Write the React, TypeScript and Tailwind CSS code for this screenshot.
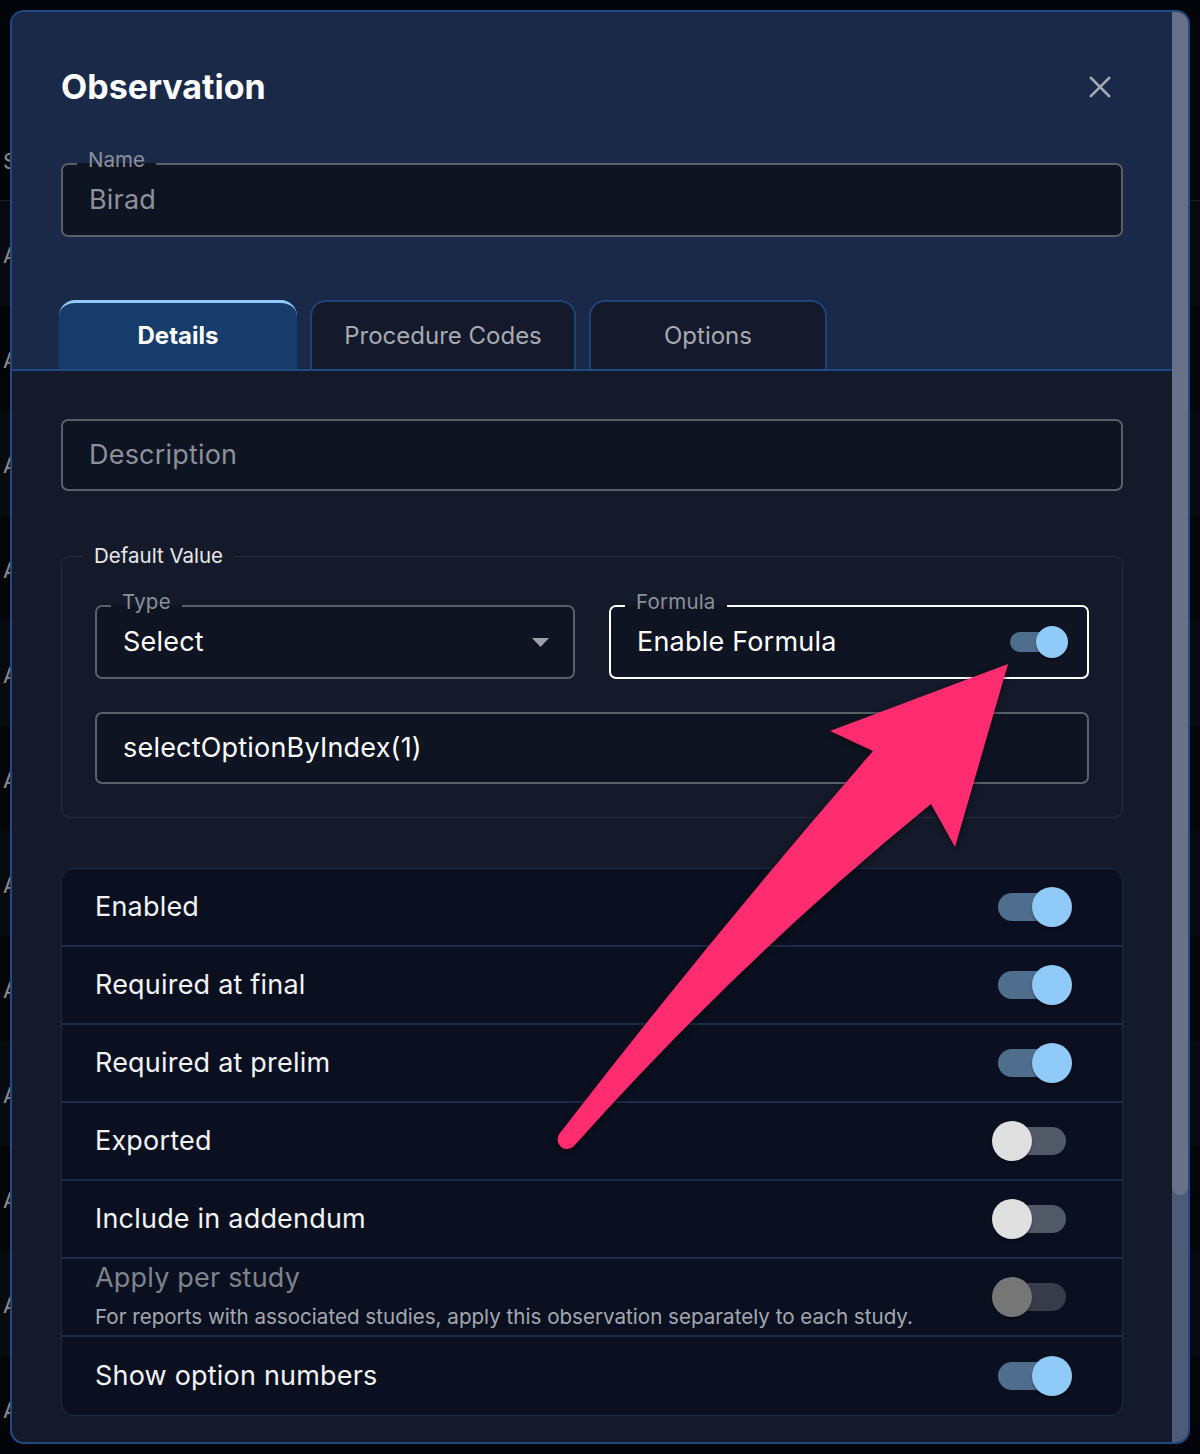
import React from 'react';

type ToggleProps = { on?: boolean; disabled?: boolean };

// MUI-like switch used in the settings list
function Toggle({ on, disabled }: ToggleProps) {
  const track = disabled ? 'bg-[#373c48]' : on ? 'bg-[#4f6d8c]' : 'bg-[#525966]';
  const thumb = disabled ? 'bg-[#767676]' : on ? 'bg-[#90caf9]' : 'bg-[#e0e0e0]';
  return (
    <div className="relative w-[80px] h-[40px] flex items-center justify-center">
      <div className={`w-[68px] h-[28px] rounded-full ${track}`} />
      <div
        className={`absolute top-0 ${on ? 'right-0' : 'left-0'} w-[40px] h-[40px] rounded-full ${thumb} shadow-[0_2px_2px_rgba(0,0,0,0.35)]`}
      />
    </div>
  );
}

function SmallToggle() {
  return (
    <div className="relative w-[58px] h-[32px] flex items-center">
      <div className="w-[52px] h-[20px] rounded-full bg-[#4f6d8c]" />
      <div className="absolute top-0 right-0 w-[32px] h-[32px] rounded-full bg-[#90caf9] shadow-[0_2px_2px_rgba(0,0,0,0.35)]" />
    </div>
  );
}

function Outlined({
  label,
  focused,
  className,
  children,
}: {
  label: string;
  focused?: boolean;
  className?: string;
  children: React.ReactNode;
}) {
  return (
    <fieldset
      className={`rounded-[7px] border-2 bg-[#0e1421] ${focused ? 'border-white' : 'border-[#5b5f68]'} ${className ?? ''}`}
    >
      <legend className="ml-[14px] px-[11px] pb-[8px] text-[20.5px] leading-[24px] text-[#8b909a]">{label}</legend>
      {children}
    </fieldset>
  );
}

const rows: { label: string; on?: boolean; disabled?: boolean; desc?: string }[] = [
  { label: 'Enabled', on: true },
  { label: 'Required at final', on: true },
  { label: 'Required at prelim', on: true },
  { label: 'Exported' },
  { label: 'Include in addendum' },
  {
    label: 'Apply per study',
    disabled: true,
    desc: 'For reports with associated studies, apply this observation separately to each study.',
  },
  { label: 'Show option numbers', on: true },
];

export default function App() {
  return (
    <div className="relative w-[1200px] h-[1454px] overflow-hidden bg-[#03050b] font-[Inter,sans-serif]">
      {/* page behind the dialog */}
      <div className="flex flex-col text-[22px] text-[#8a8a8a]">
        <div className="h-[201px] border-b border-[#1a1e29] flex flex-col justify-end pb-[24px] pl-[3px]">
          <span className="leading-[30px]">Status</span>
        </div>
        {Array.from({ length: 12 }).map((_, i) => (
          <div
            key={i}
            className={`h-[105px] flex items-center pl-[3px] pt-[4px] ${i % 2 === 0 ? 'bg-[#080a11]' : 'bg-[#03050b]'}`}
          >
            Active
          </div>
        ))}
      </div>

      {/* dialog */}
      <div className="absolute inset-0 p-[10px]">
        <div className="h-full flex rounded-[14px] border-2 border-[#1f4b85] overflow-hidden bg-[#151a2b]">
          <div className="flex-1 flex flex-col">
            <div className="bg-[#1b2949] border-b-2 border-[#1f4b85] px-[49px] pt-[55px]">
              <div className="flex items-center justify-between">
                <h1 className="text-[34px] leading-[40px] font-bold text-white">Observation</h1>
                <svg width="22" height="22" viewBox="0 0 22 22" className="mr-[12px]">
                  <path d="M2 2 L20 20 M20 2 L2 20" stroke="#a4a8b3" strokeWidth="2.6" strokeLinecap="square" />
                </svg>
              </div>

              <Outlined label="Name" className="mt-[41px]">
                <div className="px-[26px] pt-[4px] pb-[19px] text-[27px] tracking-[0.2px] leading-[32px] text-[#8d929b]">
                  Birad
                </div>
              </Outlined>

              <div className="mt-[63px] ml-[-2px] flex gap-[13px] text-[24px]">
                <div className="w-[238px] h-[69px] rounded-t-[16px] border-t-[3px] border-[#90caf9] bg-[#173c6b] flex items-center justify-center font-bold text-white">
                  Details
                </div>
                <div className="w-[266px] h-[69px] rounded-t-[16px] border-2 border-b-0 border-[#1d4477] bg-[#141a2b] flex items-center justify-center text-[#a7aab1]">
                  Procedure Codes
                </div>
                <div className="w-[238px] h-[69px] rounded-t-[16px] border-2 border-b-0 border-[#1d4477] bg-[#141a2b] flex items-center justify-center text-[#a7aab1]">
                  Options
                </div>
              </div>
            </div>

            <div className="px-[49px] pt-[48px] text-[27px] tracking-[0.2px]">
              <div className="h-[72px] rounded-[7px] border-2 border-[#5b5f68] bg-[#0e1421] flex items-center px-[26px] text-[#8b909a]">
                Description
              </div>

              <fieldset className="mt-[53px] rounded-[9px] border border-[#262d3b] px-[33px] pb-[33px]">
                <legend className="ml-[-12px] px-[11px] text-[20.5px] tracking-normal leading-[24px] text-[#e8e8ea]">
                  Default Value
                </legend>
                <div className="pt-[22px] grid grid-cols-2 gap-[34px]">
                  <Outlined label="Type">
                    <div className="flex items-center justify-between pl-[26px] pr-[24px] pt-[4px] pb-[19px] leading-[32px] text-white">
                      <span>Select</span>
                      <svg width="17" height="9" viewBox="0 0 17 9">
                        <polygon points="0,0 17,0 8.5,9" fill="#9ca0a8" />
                      </svg>
                    </div>
                  </Outlined>
                  <Outlined label="Formula" focused>
                    <div className="flex items-center justify-between pl-[26px] pr-[19px] pt-[4px] pb-[19px] leading-[32px] text-white">
                      <span>Enable Formula</span>
                      <SmallToggle />
                    </div>
                  </Outlined>
                </div>
                <div className="mt-[33px] h-[72px] rounded-[7px] border-2 border-[#5b5f68] bg-[#0e1421] flex items-center px-[26px] text-white">
                  selectOptionByIndex(1)
                </div>
              </fieldset>

              <div className="mt-[50px] rounded-[13px] border border-[#1c2b48] bg-[#0a1020] overflow-hidden">
                {rows.map((r, i) => (
                  <div
                    key={r.label}
                    className={`h-[78px] flex items-center justify-between pl-[33px] pr-[50px] ${i < rows.length - 1 ? 'border-b-2 border-[#1c2b48]' : ''}`}
                  >
                    {r.desc ? (
                      <div className="flex flex-col gap-[9px] pb-[2px]">
                        <span className="leading-[32px] text-[#7e838d]">{r.label}</span>
                        <span className="text-[20.6px] tracking-normal leading-[28px] text-[#a4a8b0]">{r.desc}</span>
                      </div>
                    ) : (
                      <span className="leading-[32px] text-[#f2f3f5]">{r.label}</span>
                    )}
                    <Toggle on={r.on} disabled={r.disabled} />
                  </div>
                ))}
              </div>
            </div>
          </div>

          {/* scrollbar */}
          <div className="w-[16px] flex flex-col bg-[#4f5a76]">
            <div className="h-[1183px] rounded-b-[8px] bg-[#6b7089]" />
          </div>
        </div>
      </div>

      {/* annotation arrow */}
      <svg
        className="absolute inset-0 pointer-events-none drop-shadow-[0_2px_3px_rgba(0,0,0,0.55)]"
        width="1200"
        height="1454"
        viewBox="0 0 1200 1454"
      >
        <path
          d="M560 1133 Q712 936 873 751 L830 731 L1008 664 L955 847 L931 804 Q742 958 574 1146 A9.5 9.5 0 0 1 560 1133 Z"
          fill="#ff2d6f"
        />
      </svg>
    </div>
  );
}
